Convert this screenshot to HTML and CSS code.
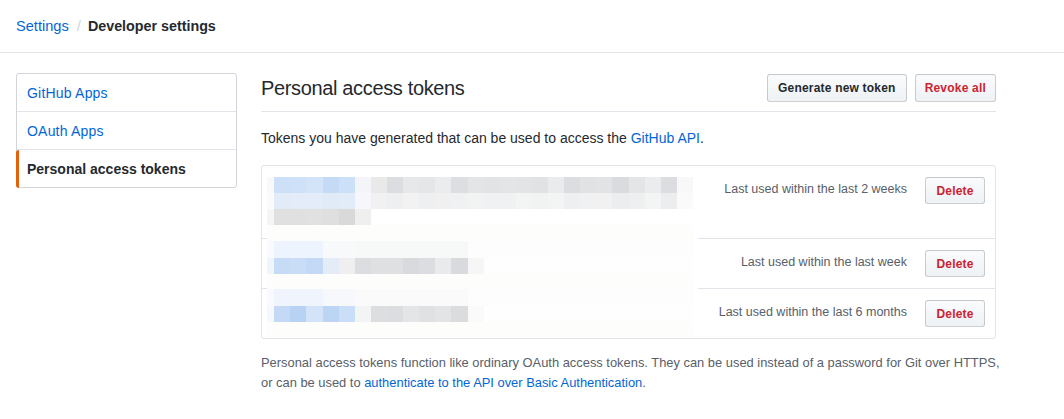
FILE: index.html
```html
<!DOCTYPE html>
<html lang="en">
<head>
<meta charset="utf-8">
<title>Personal access tokens</title>
<link rel="stylesheet" href="styles.css">
</head>
<body>
<header class="crumbs">
  <a href="#" class="crumb-link">Settings</a>
  <span class="crumb-sep">/</span>
  <strong class="crumb-current">Developer settings</strong>
</header>
<div class="layout">
  <nav class="menu">
    <a href="#" class="menu-item">GitHub Apps</a>
    <a href="#" class="menu-item">OAuth Apps</a>
    <a href="#" class="menu-item selected">Personal access tokens</a>
  </nav>
  <main class="content">
    <div class="subhead">
      <h2 class="subhead-title">Personal access tokens</h2>
      <div class="subhead-actions">
        <button class="btn">Generate new token</button>
        <button class="btn btn-danger btn-revoke">Revoke all</button>
      </div>
    </div>
    <p class="intro">Tokens you have generated that can be used to access the <a href="#">GitHub API</a>.</p>
    <div class="token-box">
      <svg class="redacted" width="431" height="159" viewBox="0 0 431 159" aria-hidden="true">
        <rect x="0" y="0" width="431" height="159" fill="#ffffff"/>
        <!-- group 1 row 0 -->
        <rect x="0" y="0" width="7" height="16" fill="#f8f9fb"/>
        <rect x="7" y="0" width="16" height="16" fill="#cde0f7"/>
        <rect x="23" y="0" width="16" height="16" fill="#cfe1f8"/>
        <rect x="39" y="0" width="17" height="16" fill="#d3e4f8"/>
        <rect x="56" y="0" width="16" height="16" fill="#c4daf5"/>
        <rect x="72" y="0" width="16" height="16" fill="#cce0f7"/>
        <rect x="88" y="0" width="16" height="16" fill="#f3f5f9"/>
        <rect x="104" y="0" width="16" height="16" fill="#e9e9ea"/>
        <rect x="120" y="0" width="16" height="16" fill="#dcdde0"/>
        <rect x="136" y="0" width="16" height="16" fill="#e7e8ea"/>
        <rect x="152" y="0" width="16" height="16" fill="#e5e6e8"/>
        <rect x="168" y="0" width="16" height="16" fill="#ebecee"/>
        <rect x="184" y="0" width="17" height="16" fill="#dddee1"/>
        <rect x="201" y="0" width="16" height="16" fill="#e4e5e7"/>
        <rect x="217" y="0" width="16" height="16" fill="#e2e3e5"/>
        <rect x="233" y="0" width="16" height="16" fill="#e4e5e7"/>
        <rect x="249" y="0" width="16" height="16" fill="#e3e4e6"/>
        <rect x="265" y="0" width="16" height="16" fill="#e1e2e4"/>
        <rect x="281" y="0" width="16" height="16" fill="#eaebec"/>
        <rect x="297" y="0" width="16" height="16" fill="#dcdde0"/>
        <rect x="313" y="0" width="16" height="16" fill="#e1e2e4"/>
        <rect x="329" y="0" width="16" height="16" fill="#e2e3e5"/>
        <rect x="345" y="0" width="17" height="16" fill="#dadbde"/>
        <rect x="362" y="0" width="16" height="16" fill="#e4e5e7"/>
        <rect x="378" y="0" width="16" height="16" fill="#ebecee"/>
        <rect x="394" y="0" width="16" height="16" fill="#dcdde0"/>
        <rect x="410" y="0" width="16" height="16" fill="#f8f8f9"/>
        <!-- group 1 row 1 -->
        <rect x="0" y="16" width="7" height="16" fill="#fafbfc"/>
        <rect x="7" y="16" width="16" height="16" fill="#e2ebf8"/>
        <rect x="23" y="16" width="16" height="16" fill="#e3ecf8"/>
        <rect x="39" y="16" width="17" height="16" fill="#e3ecf8"/>
        <rect x="56" y="16" width="16" height="16" fill="#e1eaf7"/>
        <rect x="72" y="16" width="16" height="16" fill="#e2ebf8"/>
        <rect x="88" y="16" width="16" height="16" fill="#f6f7fa"/>
        <rect x="104" y="16" width="16" height="16" fill="#f1f1f2"/>
        <rect x="120" y="16" width="16" height="16" fill="#eeeff0"/>
        <rect x="136" y="16" width="16" height="16" fill="#f2f2f3"/>
        <rect x="152" y="16" width="16" height="16" fill="#eeeff0"/>
        <rect x="168" y="16" width="16" height="16" fill="#f0f0f1"/>
        <rect x="184" y="16" width="17" height="16" fill="#f0f1f2"/>
        <rect x="201" y="16" width="16" height="16" fill="#f2f3f3"/>
        <rect x="217" y="16" width="16" height="16" fill="#f0f1f2"/>
        <rect x="233" y="16" width="16" height="16" fill="#f0f1f2"/>
        <rect x="249" y="16" width="16" height="16" fill="#f3f4f4"/>
        <rect x="265" y="16" width="16" height="16" fill="#f1f2f2"/>
        <rect x="281" y="16" width="16" height="16" fill="#f3f4f4"/>
        <rect x="297" y="16" width="16" height="16" fill="#eeeff0"/>
        <rect x="313" y="16" width="16" height="16" fill="#f0f1f2"/>
        <rect x="329" y="16" width="16" height="16" fill="#f1f1f2"/>
        <rect x="345" y="16" width="17" height="16" fill="#ecedef"/>
        <rect x="362" y="16" width="16" height="16" fill="#eeeff0"/>
        <rect x="378" y="16" width="16" height="16" fill="#f3f4f4"/>
        <rect x="394" y="16" width="16" height="16" fill="#ecedef"/>
        <rect x="410" y="16" width="16" height="16" fill="#fafafa"/>
        <!-- group 1 row 2 -->
        <rect x="0" y="32" width="7" height="16" fill="#f5f5f5"/>
        <rect x="7" y="32" width="16" height="16" fill="#e0e0e0"/>
        <rect x="23" y="32" width="16" height="16" fill="#e0e0e0"/>
        <rect x="39" y="32" width="17" height="16" fill="#e1e1e1"/>
        <rect x="56" y="32" width="16" height="16" fill="#dfdfdf"/>
        <rect x="72" y="32" width="16" height="16" fill="#d9d9da"/>
        <rect x="88" y="32" width="16" height="16" fill="#efefef"/>
        <!-- group 1 row 3 -->
        <rect x="0" y="48" width="426" height="16" fill="#fdfdfc"/>
        <!-- group 2 row 0 -->
        <rect x="0" y="64" width="7" height="17" fill="#f8fafd"/>
        <rect x="7" y="64" width="49" height="17" fill="#eef4fd"/>
        <rect x="56" y="64" width="32" height="17" fill="#f8f9fb"/>
        <rect x="88" y="64" width="113" height="17" fill="#f7f8f8"/>
        <rect x="201" y="64" width="225" height="17" fill="#fdfdfd"/>
        <!-- group 2 row 1 -->
        <rect x="0" y="81" width="7" height="16" fill="#f0f4fb"/>
        <rect x="7" y="81" width="16" height="16" fill="#c6dbf5"/>
        <rect x="23" y="81" width="16" height="16" fill="#c9ddf6"/>
        <rect x="39" y="81" width="17" height="16" fill="#c3d9f5"/>
        <rect x="56" y="81" width="16" height="16" fill="#e4ecf8"/>
        <rect x="72" y="81" width="16" height="16" fill="#efefef"/>
        <rect x="88" y="81" width="16" height="16" fill="#dcdde0"/>
        <rect x="104" y="81" width="16" height="16" fill="#dfe0e2"/>
        <rect x="120" y="81" width="16" height="16" fill="#dfe0e2"/>
        <rect x="136" y="81" width="16" height="16" fill="#d9dadd"/>
        <rect x="152" y="81" width="16" height="16" fill="#dcdde0"/>
        <rect x="168" y="81" width="16" height="16" fill="#e9eaeb"/>
        <rect x="184" y="81" width="17" height="16" fill="#d9dadd"/>
        <rect x="201" y="81" width="16" height="16" fill="#f6f6f6"/>
        <rect x="217" y="81" width="209" height="16" fill="#fefefe"/>
        <!-- group 2 row 2 -->
        <rect x="0" y="97" width="426" height="15" fill="#fdfdfc"/>
        <!-- group 3 row 0 -->
        <rect x="0" y="112" width="7" height="17" fill="#f8fafd"/>
        <rect x="7" y="112" width="49" height="17" fill="#eff4fd"/>
        <rect x="56" y="112" width="32" height="17" fill="#f7f8fb"/>
        <rect x="88" y="112" width="113" height="17" fill="#fafafa"/>
        <rect x="201" y="112" width="225" height="17" fill="#fdfdfd"/>
        <!-- group 3 row 1 -->
        <rect x="0" y="129" width="7" height="16" fill="#f5f8fc"/>
        <rect x="7" y="129" width="16" height="16" fill="#c3d9f5"/>
        <rect x="23" y="129" width="16" height="16" fill="#b8d2f3"/>
        <rect x="39" y="129" width="17" height="16" fill="#d3e4f8"/>
        <rect x="56" y="129" width="16" height="16" fill="#bcd5f4"/>
        <rect x="72" y="129" width="16" height="16" fill="#cadef7"/>
        <rect x="88" y="129" width="16" height="16" fill="#f3f4f4"/>
        <rect x="104" y="129" width="16" height="16" fill="#dddee0"/>
        <rect x="120" y="129" width="16" height="16" fill="#dcdde0"/>
        <rect x="136" y="129" width="16" height="16" fill="#e4e5e7"/>
        <rect x="152" y="129" width="16" height="16" fill="#e0e1e3"/>
        <rect x="168" y="129" width="16" height="16" fill="#e3e4e6"/>
        <rect x="184" y="129" width="17" height="16" fill="#dbdcde"/>
        <rect x="201" y="129" width="16" height="16" fill="#fafafa"/>
        <rect x="217" y="129" width="209" height="16" fill="#fefefe"/>
        <!-- group 3 row 2 -->
        <rect x="0" y="145" width="426" height="14" fill="#fdfdfc"/>
      </svg>
      <div class="token-row token-row-tall">
        <div class="token-info"></div>
        <span class="last-used">Last used within the last 2 weeks</span>
        <button class="btn btn-danger btn-delete">Delete</button>
      </div>
      <div class="token-row">
        <div class="token-info"></div>
        <span class="last-used">Last used within the last week</span>
        <button class="btn btn-danger btn-delete">Delete</button>
      </div>
      <div class="token-row">
        <div class="token-info"></div>
        <span class="last-used">Last used within the last 6 months</span>
        <button class="btn btn-danger btn-delete">Delete</button>
      </div>
    </div>
    <p class="note">Personal access tokens function like ordinary OAuth access tokens. They can be used instead of a password for Git over HTTPS,<br>or can be used to <a href="#">authenticate to the API over Basic Authentication</a>.</p>
  </main>
</div>
</body>
</html>
```

FILE: styles.css
```css
* { box-sizing: border-box; }

body {
  margin: 0;
  font-family: "Liberation Sans", Arial, sans-serif;
  font-size: 14px;
  color: #24292e;
  background: #fff;
}

a { color: #0366d6; text-decoration: none; }

.crumbs {
  height: 53px;
  border-bottom: 1px solid #e1e4e8;
  display: flex;
  align-items: center;
  padding: 0 0 1px 16px;
  font-size: 15px;
}
.crumb-link { font-size: 14.6px; }
.crumb-sep { color: #d1d5da; margin: 0 7px 0 8px; }
.crumb-current { font-weight: bold; color: #24292e; font-size: 14.3px; }

.layout {
  display: flex;
  align-items: flex-start;
  gap: 24px;
  padding: 20px 0 0 16px;
}

.menu {
  width: 221px;
  border: 1px solid #d1d5da;
  border-radius: 3px;
  display: flex;
  flex-direction: column;
}
.menu-item {
  position: relative;
  display: block;
  padding: 9px 10px 8px;
  line-height: 20px;
  border-bottom: 1px solid #e1e4e8;
  color: #0366d6;
  letter-spacing: 0.2px;
}
.menu-item:last-child { border-bottom: 0; }
.menu-item.selected { color: #24292e; font-weight: bold; letter-spacing: 0; }
.menu-item.selected::before {
  content: "";
  position: absolute;
  left: -1px;
  top: 0;
  bottom: -1px;
  width: 3px;
  background: #e36209;
  border-radius: 3px 0 0 3px;
}

.content { width: 735px; }

.subhead {
  display: flex;
  align-items: center;
  justify-content: space-between;
  padding: 1px 0 9px;
  border-bottom: 1px solid #e1e4e8;
}
.subhead-title {
  margin: 0;
  font-size: 20px;
  font-weight: normal;
  line-height: 28px;
  letter-spacing: -0.35px;
}
.subhead-actions { display: flex; gap: 8px; }

.btn {
  height: 28px;
  padding: 0 10px;
  font-family: inherit;
  font-size: 12px;
  font-weight: bold;
  letter-spacing: 0.2px;
  color: #24292e;
  background: linear-gradient(180deg, #fafbfc, #eff3f6 90%);
  border: 1px solid rgba(27, 31, 35, 0.2);
  border-radius: 3px;
}
.btn-danger { color: #cb2431; }
.btn-revoke { padding: 0 9px; }

.intro {
  margin: 16px 0 16px;
  line-height: 21px;
}

.token-box {
  position: relative;
  border: 1px solid #e1e4e8;
  border-radius: 3px;
}
.redacted {
  position: absolute;
  left: 5px;
  top: 11px;
  display: block;
}
.token-row {
  display: flex;
  align-items: flex-start;
  padding: 11px 10px;
  border-top: 1px solid #e1e4e8;
}
.token-row:first-of-type { border-top: 0; }
.token-row-tall { min-height: 72px; }
.token-info { flex: 1; }
.last-used {
  font-size: 12.5px;
  line-height: 24px;
  color: #586069;
  margin-right: 18px;
}
.btn-delete { height: 27px; width: 60px; padding: 0; }

.note {
  margin: 14px -40px 0 0;
  font-size: 12.9px;
  line-height: 20px;
  color: #586069;
}
```
